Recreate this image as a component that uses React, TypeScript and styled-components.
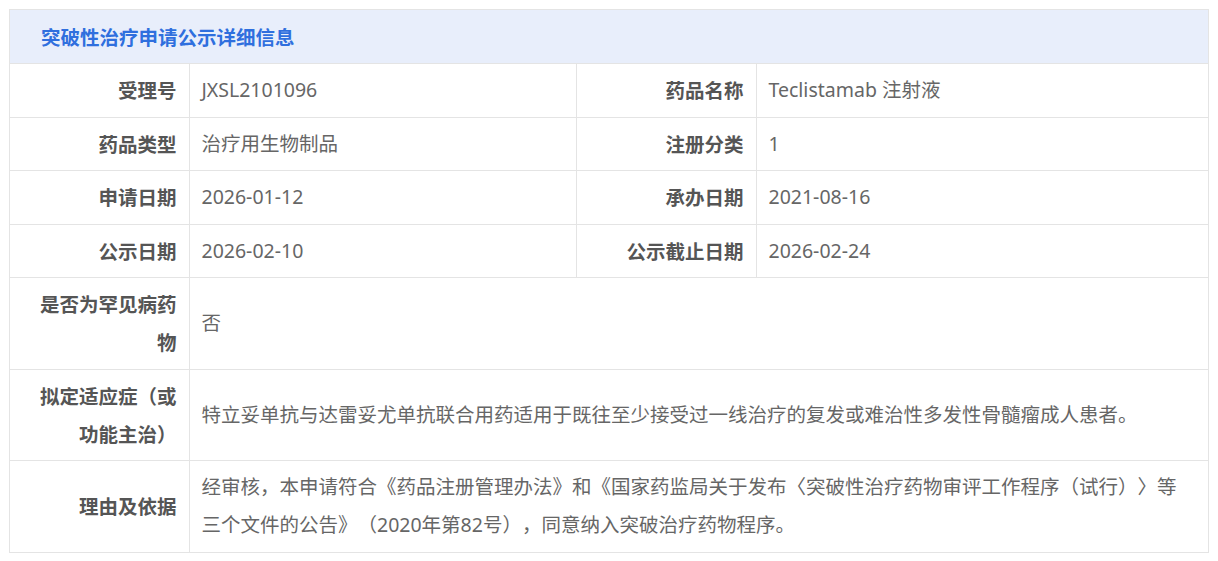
import React from "react";
import styled, { createGlobalStyle } from "styled-components";

const GlobalStyle = createGlobalStyle`
    html, body {
        margin: 0;
        padding: 0;
        background: #ffffff;
    }
    body {
        font-family: "Noto Sans", "Noto Sans CJK SC", sans-serif;
    }
`;

const Page = styled.div`
    padding: 9px;
`;

const Panel = styled.div`
    width: 1200px;
    box-sizing: border-box;
    border: 1px solid #e4e4e4;
`;

const PanelHeader = styled.div`
    height: 53px;
    display: flex;
    align-items: center;
    padding-left: 31px;
    background-color: #e8eefb;
    color: #2f6fde;
    font-family: "Noto Sans CJK SC", sans-serif;
    font-size: 19.5px;
    font-weight: 700;
`;

const Table = styled.table`
    width: 100%;
    border-collapse: collapse;
    table-layout: fixed;
    font-size: 19.5px;
    line-height: 38px;
    text-spacing-trim: space-all;
`;

const Th = styled.th`
    box-sizing: border-box;
    padding: 7.25px 12px 7.25px 29px;
    text-align: right;
    vertical-align: middle;
    font-weight: 700;
    color: #555555;
    border-top: 1px solid #e4e4e4;
    border-right: 1px solid #e4e4e4;
    font-family: "Noto Sans CJK SC", sans-serif;
`;

const Td = styled.td<{ $last?: boolean }>`
    box-sizing: border-box;
    padding: 7.25px 20px 7.25px 12px;
    text-align: left;
    vertical-align: middle;
    color: #666666;
    border-top: 1px solid #e4e4e4;
    border-right: ${(p) => (p.$last ? "none" : "1px solid #e4e4e4")};
`;

interface IPair {
    label: string;
    value: string;
}

//* 两列一行的数据
const pairRows: [IPair, IPair][] = [
    [
        { label: "受理号", value: "JXSL2101096" },
        { label: "药品名称", value: "Teclistamab 注射液" },
    ],
    [
        { label: "药品类型", value: "治疗用生物制品" },
        { label: "注册分类", value: "1" },
    ],
    [
        { label: "申请日期", value: "2026-01-12" },
        { label: "承办日期", value: "2021-08-16" },
    ],
    [
        { label: "公示日期", value: "2026-02-10" },
        { label: "公示截止日期", value: "2026-02-24" },
    ],
];

//* 整行的数据
const wideRows: IPair[] = [
    { label: "是否为罕见病药物", value: "否" },
    {
        label: "拟定适应症（或功能主治）",
        value: "特立妥单抗与达雷妥尤单抗联合用药适用于既往至少接受过一线治疗的复发或难治性多发性骨髓瘤成人患者。",
    },
    {
        label: "理由及依据",
        value: "经审核，本申请符合《药品注册管理办法》和《国家药监局关于发布〈突破性治疗药物审评工作程序（试行）〉等三个文件的公告》（2020年第82号），同意纳入突破治疗药物程序。",
    },
];

const App: React.FC = () => {
    return (
        <Page>
            <GlobalStyle />
            <Panel>
                <PanelHeader>突破性治疗申请公示详细信息</PanelHeader>
                <Table>
                    <colgroup>
                        <col style={{ width: 179 }} />
                        <col style={{ width: 387 }} />
                        <col style={{ width: 180 }} />
                        <col />
                    </colgroup>
                    <tbody>
                        {pairRows.map(([left, right]) => (
                            <tr key={left.label}>
                                <Th>{left.label}</Th>
                                <Td>{left.value}</Td>
                                <Th>{right.label}</Th>
                                <Td $last>{right.value}</Td>
                            </tr>
                        ))}
                        {wideRows.map((row) => (
                            <tr key={row.label}>
                                <Th>{row.label}</Th>
                                <Td colSpan={3} $last>
                                    {row.value}
                                </Td>
                            </tr>
                        ))}
                    </tbody>
                </Table>
            </Panel>
        </Page>
    );
};

export default App;
